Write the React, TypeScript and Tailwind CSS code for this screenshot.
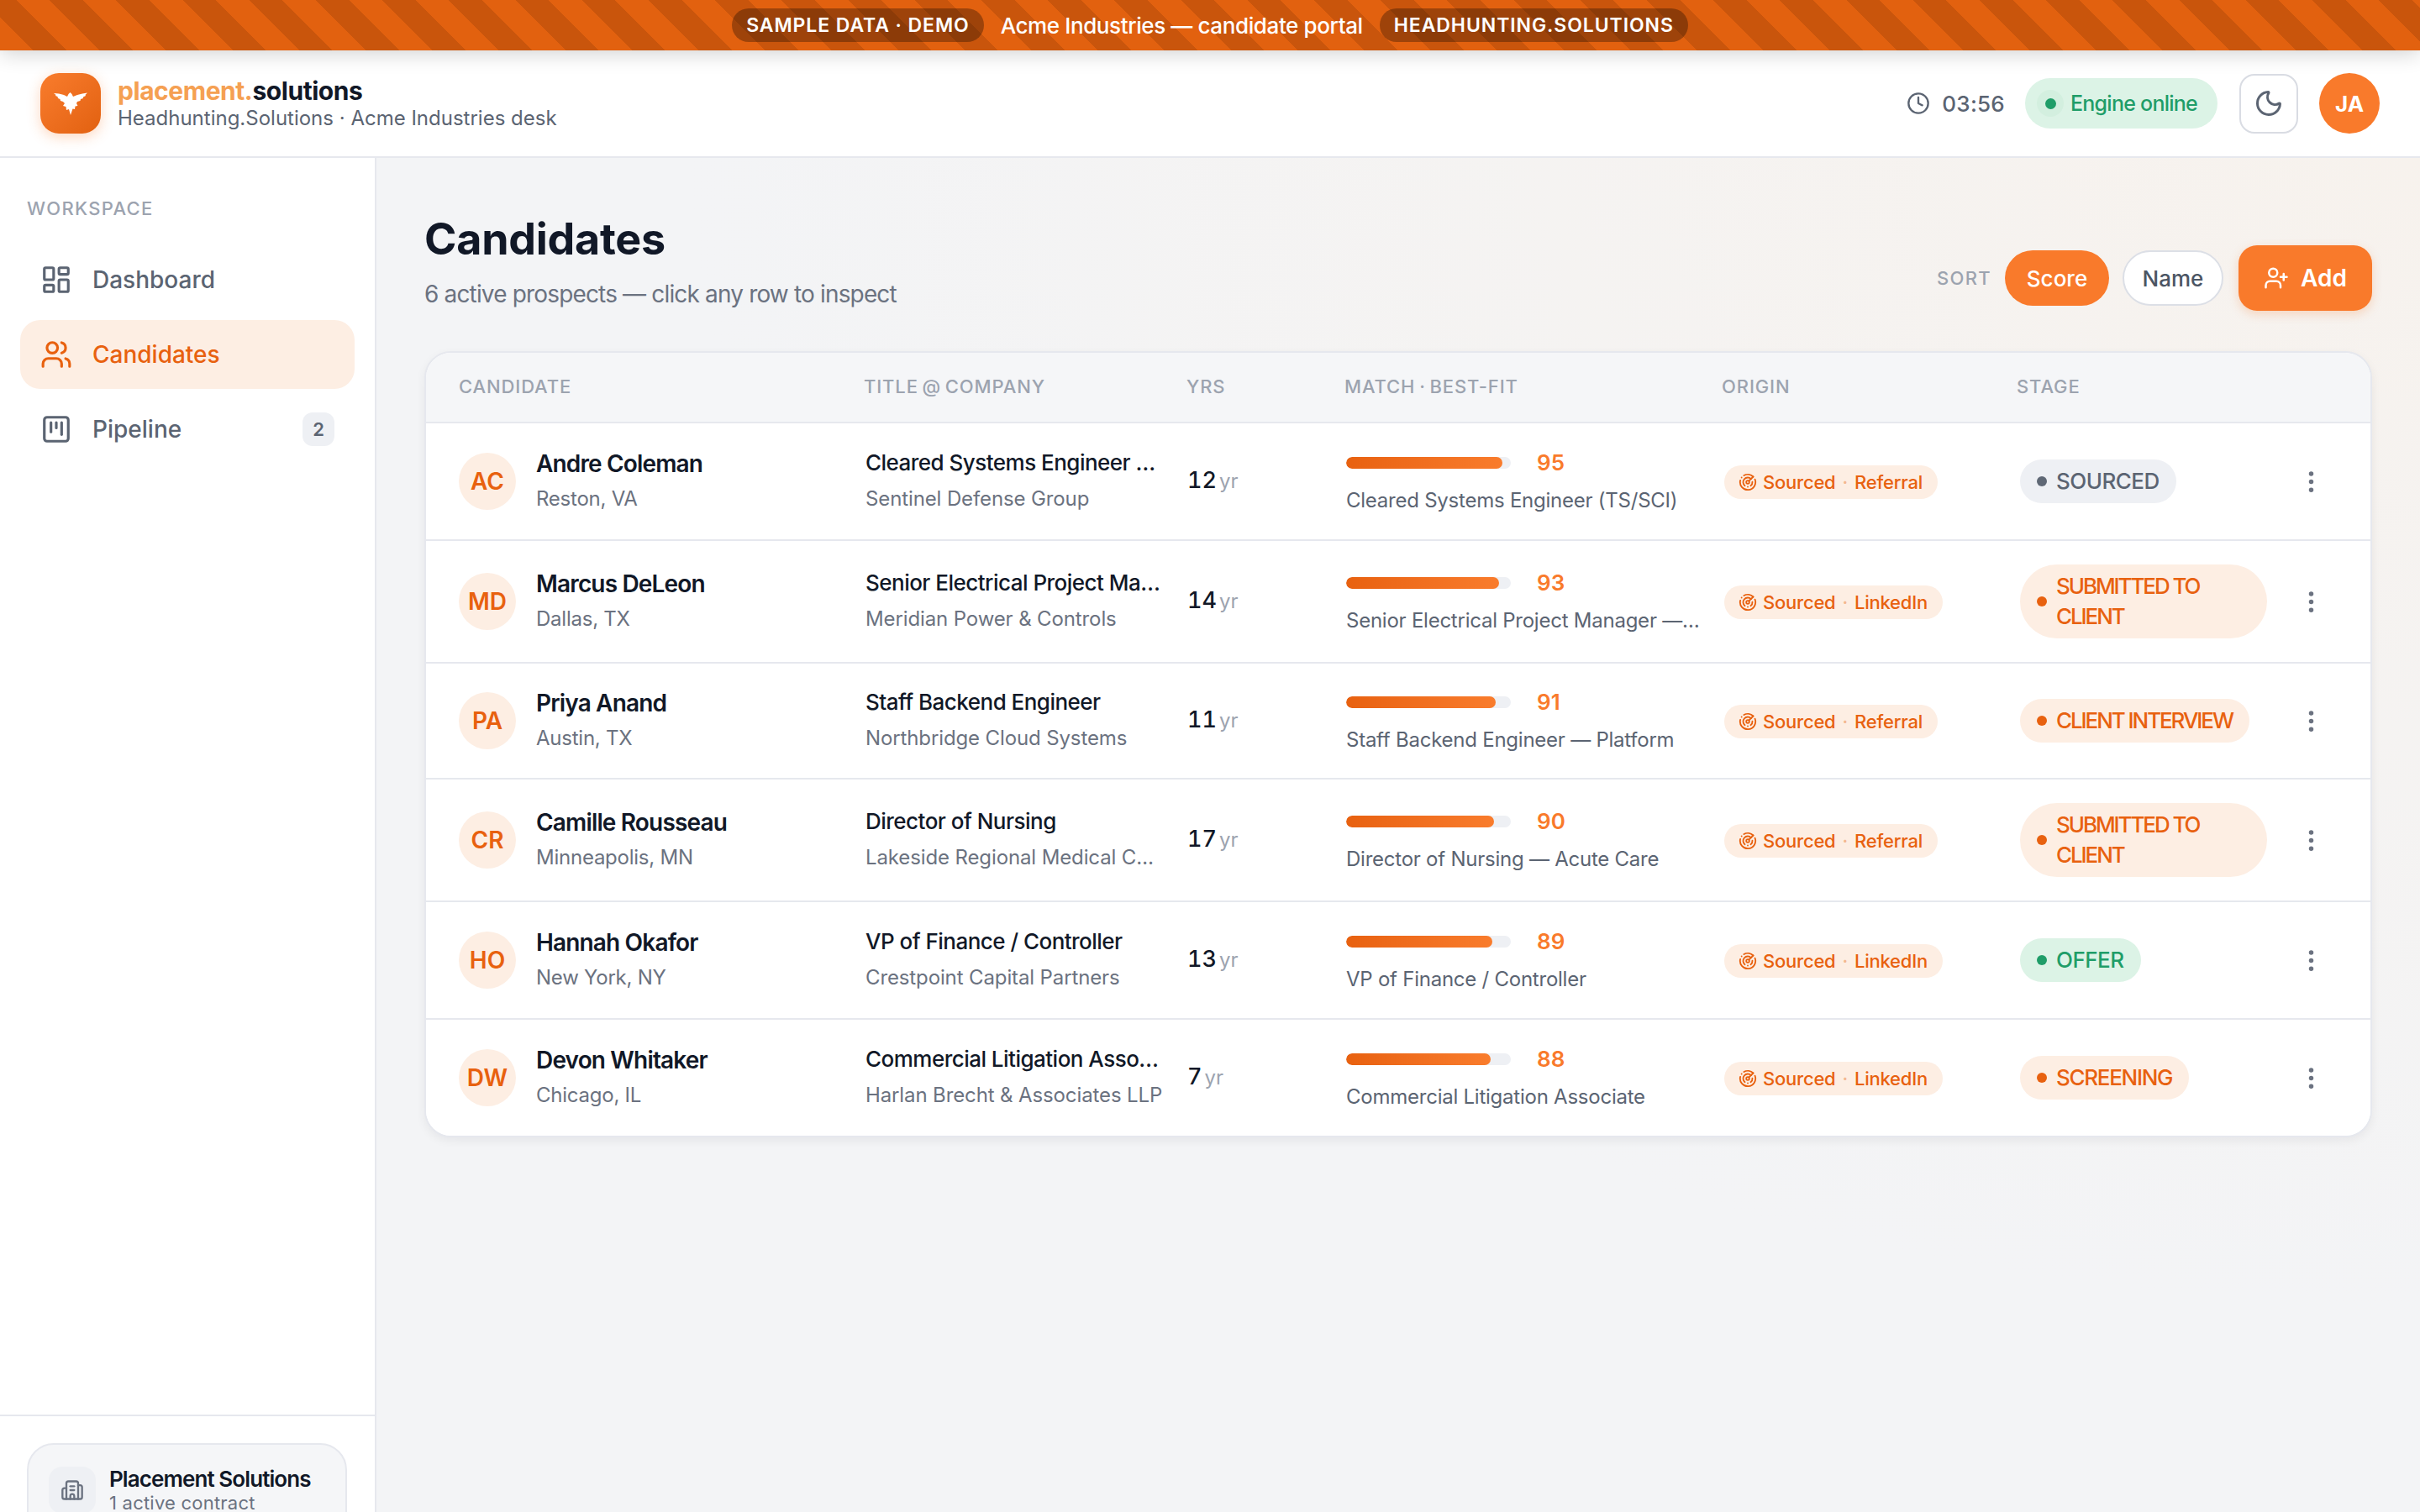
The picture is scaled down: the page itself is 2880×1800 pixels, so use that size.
import { Building2, Clock, EllipsisVertical, LayoutDashboard, Moon, Radar, SquareKanban, UserPlus, Users } from "lucide-react";
import clsx from "clsx";

type Stage = "gray" | "orange" | "green";

const gridCols = "grid grid-cols-[482px_384px_188px_449px_351px_300px_1fr] pl-[39px]";

const stageStyles: Record<Stage, { pill: string; dot: string }> = {
  gray: { pill: "bg-[#eef0f4] text-[#5b6472]", dot: "bg-[#5f6875]" },
  orange: { pill: "bg-[#fdeee3] text-[#e8610f]", dot: "bg-[#e8610f]" },
  green: { pill: "bg-[#dcf3e6] text-[#1f9d68]", dot: "bg-[#1f9d68]" },
};

const tight = "tracking-[-0.08em]";
const mid = "tracking-[-0.05em]";
const loose = "tracking-[-0.02em]";

const candidates = [
  { initials: "AC", name: "Andre Coleman", loc: "Reston, VA", title: "Cleared Systems Engineer (TS/SCI)", company: "Sentinel Defense Group", yrs: 12, score: 95, fit: "Cleared Systems Engineer (TS/SCI)", origin: "Referral", stage: "SOURCED", tone: "gray" as Stage, track: loose, h: "h-[140px]" },
  { initials: "MD", name: "Marcus DeLeon", loc: "Dallas, TX", title: "Senior Electrical Project Manager", company: "Meridian Power & Controls", yrs: 14, score: 93, fit: "Senior Electrical Project Manager — Utilities", origin: "LinkedIn", stage: "SUBMITTED TO CLIENT", tone: "orange" as Stage, track: tight, h: "h-[146px]" },
  { initials: "PA", name: "Priya Anand", loc: "Austin, TX", title: "Staff Backend Engineer", company: "Northbridge Cloud Systems", yrs: 11, score: 91, fit: "Staff Backend Engineer — Platform", origin: "Referral", stage: "CLIENT INTERVIEW", tone: "orange" as Stage, track: tight, h: "h-[138px]" },
  { initials: "CR", name: "Camille Rousseau", loc: "Minneapolis, MN", title: "Director of Nursing", company: "Lakeside Regional Medical Center", yrs: 17, score: 90, fit: "Director of Nursing — Acute Care", origin: "Referral", stage: "SUBMITTED TO CLIENT", tone: "orange" as Stage, track: tight, h: "h-[146px]" },
  { initials: "HO", name: "Hannah Okafor", loc: "New York, NY", title: "VP of Finance / Controller", company: "Crestpoint Capital Partners", yrs: 13, score: 89, fit: "VP of Finance / Controller", origin: "LinkedIn", stage: "OFFER", tone: "green" as Stage, track: loose, h: "h-[140px]" },
  { initials: "DW", name: "Devon Whitaker", loc: "Chicago, IL", title: "Commercial Litigation Associate", company: "Harlan Brecht & Associates LLP", yrs: 7, score: 88, fit: "Commercial Litigation Associate", origin: "LinkedIn", stage: "SCREENING", tone: "orange" as Stage, track: mid, h: "h-[138px]" },
];

function Logo() {
  return (
    <div className="flex h-[72px] w-[72px] shrink-0 items-center justify-center rounded-[22px] bg-gradient-to-br from-[#f97c2c] to-[#e2610f] shadow-[0_4px_16px_rgba(249,122,43,0.3)]">
      <svg width="40" height="28" viewBox="0 0 40 28" fill="#fff">
        <polygon points="0,2 6,2.500 12,4 16,6 17.500,3 19.500,1 21.500,3 23,6 28,4 34,2.500 40,1.500 37.500,4 38,5 35,6.500 35,8 32,9 31.500,11 28,12 27,14 28.500,17 25.500,17.500 25,21 22.500,20.500 20,28 18,21 15,22 14.500,18 11,17 13,14 11,12 8,11 7.500,9 5,8 4.500,6 2,5 2.500,4" />
      </svg>
    </div>
  );
}

function NavItem({ icon: Icon, label, active, badge }: { icon: typeof Users; label: string; active?: boolean; badge?: string }) {
  return (
    <div
      className={clsx(
        "flex h-[82px] items-center gap-[24px] rounded-[24px] pl-[24px] pr-[24px] text-[28px] font-medium",
        active ? "bg-[#fdeee3] text-[#e8610f]" : "text-[#5b6472]",
      )}
    >
      <Icon size={38} strokeWidth={2} />
      <span className="flex-1">{label}</span>
      {badge && (
        <span className="flex h-[40px] w-[38px] items-center justify-center rounded-[12px] bg-[#eef0f4] text-[22px] font-semibold">
          {badge}
        </span>
      )}
    </div>
  );
}

function Row({ c, last }: { c: (typeof candidates)[number]; last: boolean }) {
  const tone = stageStyles[c.tone];
  return (
    <div className={clsx(gridCols, "items-center bg-white", c.h, !last && "border-b-2 border-[#e6e8ee]")}>
      <div className="flex items-center gap-[24px]">
        <div className="flex h-[68px] w-[68px] items-center justify-center rounded-full bg-[#fdeee3] text-[28px] font-semibold text-[#e8610f]">
          {c.initials}
        </div>
        <div>
          <p className="text-[28px] leading-[36px] font-semibold tracking-[-0.03em] text-[#111827]">{c.name}</p>
          <p className="mt-[6px] text-[24px] leading-[36px] tracking-[-0.01em] text-[#6b7280]">{c.loc}</p>
        </div>
      </div>
      <div className="mb-[2px] ml-[2px]">
        <p className="max-w-[354px] truncate text-[26px] leading-[36px] font-medium tracking-[-0.02em] text-[#111827]">{c.title}</p>
        <p className="mt-[7px] max-w-[356px] truncate text-[24px] leading-[36px] tracking-[-0.005em] text-[#6b7280]">{c.company}</p>
      </div>
      <div className="mb-[1px] ml-[1px] flex items-baseline gap-[3px]">
        <span className="text-[27px] font-medium tabular-nums text-[#111827]">{c.yrs}</span>
        <span className="text-[24px] text-[#9ca3af]">yr</span>
      </div>
      <div className="ml-[2px]">
        <div className="flex h-[36px] items-center">
          <div className="h-[14px] w-[196px] overflow-hidden rounded-full bg-[#eef0f4]">
            <div className="h-full rounded-full bg-gradient-to-r from-[#e8610f] to-[#f97c2c]" style={{ width: `${c.score}%` }} />
          </div>
          <span className="ml-[31px] text-[26px] font-semibold text-[#f97a2b]">{c.score}</span>
        </div>
        <p className="mt-[9px] max-w-[424px] truncate text-[24px] leading-[36px] tracking-[-0.01em] text-[#5b6472]">{c.fit}</p>
      </div>
      <div className="ml-[3px] mt-[2px]">
        <span className="inline-flex h-[40px] items-center rounded-full bg-[#fdeee3] pl-[17px] pr-[18px] text-[22px] font-medium tracking-[-0.01em] text-[#e8610f]">
          <Radar size={22} strokeWidth={2} />
          <span className="ml-[7px]">Sourced</span>
          <span className="mx-[8px] text-[#f3b78f]">·</span>
          <span>{c.origin}</span>
        </span>
      </div>
      <div className="ml-[4px]">
        <span className={clsx("inline-flex max-w-[294px] items-center gap-[11px] rounded-full px-[20px] py-[8px] text-[26px] leading-[36px] font-medium", c.track, tone.pill)}>
          <span className={clsx("h-[12px] w-[12px] shrink-0 rounded-full", tone.dot)} />
          <span>{c.stage}</span>
        </span>
      </div>
      <div className="pl-[34px] text-[#6b7280]">
        <EllipsisVertical size={33} strokeWidth={2} />
      </div>
    </div>
  );
}

export default function App() {
  return (
    <div className="flex h-screen w-full flex-col overflow-hidden bg-white font-[Inter,sans-serif]">
      <div className="relative z-20 flex h-[60px] shrink-0 items-center justify-center gap-[20px] bg-[repeating-linear-gradient(45deg,#e2610f,#e2610f_28px,#c9550c_28px,#c9550c_56px)] text-white shadow-[0_4px_24px_rgba(0,0,0,0.18)]">
        <span className="flex h-[40px] items-center rounded-full bg-black/30 px-[17px] text-[23px] font-semibold tracking-[0.04em]">SAMPLE DATA · DEMO</span>
        <span className="text-[26px] font-medium tracking-[-0.015em]">Acme Industries — candidate portal</span>
        <span className="flex h-[40px] items-center rounded-full bg-black/30 px-[17px] text-[23px] font-semibold tracking-[0.04em]">HEADHUNTING.SOLUTIONS</span>
      </div>

      <header className="flex h-[128px] shrink-0 items-center justify-between border-b-2 border-[#e6e8ee] bg-white pl-[48px] pr-[48px]">
        <div className="flex items-center gap-[20px]">
          <Logo />
          <div>
            <p className="text-[30px] leading-[36px] font-bold tracking-[-0.015em]">
              <span className="text-[#f5a052]">placement.</span>
              <span className="text-[#111827]">solutions</span>
            </p>
            <p className="text-[24px] leading-[30px] text-[#5b6472]">Headhunting.Solutions · Acme Industries desk</p>
          </div>
        </div>
        <div className="flex items-center">
          <Clock size={28} className="text-[#5b6472]" />
          <span className="ml-[14px] text-[26px] font-medium tracking-[0.01em] text-[#5b6472]">03:56</span>
          <div className="ml-[24px] flex h-[60px] w-[229px] items-center rounded-full bg-[#dcf3e6] pl-[14px] text-[25px] font-medium tracking-[-0.03em] text-[#1f9d68]">
            <span className="flex h-[32px] w-[32px] items-center justify-center rounded-full bg-[#d3efdf]">
              <span className="h-[13px] w-[13px] rounded-full bg-[#1f9d68]" />
            </span>
            <span className="ml-[8px] pt-[1px]">Engine online</span>
          </div>
          <button className="ml-[26px] flex h-[71px] w-[70px] items-center justify-center rounded-[18px] border-2 border-[#d9dce3] bg-white text-[#5b6472]">
            <Moon size={36} />
          </button>
          <div className="ml-[25px] flex h-[72px] w-[72px] items-center justify-center rounded-full bg-[#f97a2b] text-[26px] font-bold text-white">JA</div>
        </div>
      </header>

      <div className="flex min-h-0 flex-1">
        <aside className="flex w-[448px] shrink-0 flex-col border-r-2 border-[#e6e8ee] bg-white">
          <nav className="flex-1 px-[24px] pt-[45px]">
            <p className="mb-[29px] pl-[8px] text-[22px] leading-[30px] font-medium tracking-[0.06em] text-[#9ca3af]">WORKSPACE</p>
            <div className="flex flex-col gap-[7px]">
              <NavItem icon={LayoutDashboard} label="Dashboard" />
              <NavItem icon={Users} label="Candidates" active />
              <NavItem icon={SquareKanban} label="Pipeline" badge="2" />
            </div>
          </nav>
          <div className="h-[116px] shrink-0 overflow-hidden border-t-2 border-[#e6e8ee] pl-[32px] pr-[33px] pt-[32px]">
            <div className="flex h-[120px] items-start gap-[16px] rounded-[32px] border-2 border-[#e6e8ee] bg-[#f5f6f8] pl-[24px] pt-[26px]">
              <div className="flex h-[56px] w-[56px] shrink-0 items-center justify-center rounded-[16px] bg-[#eef0f4] text-[#6b7280]">
                <Building2 size={28} />
              </div>
              <div>
                <p className="text-[26px] leading-[30px] font-semibold tracking-[-0.035em] text-[#111827]">Placement Solutions</p>
                <p className="text-[22px] leading-[26px] tracking-[0.01em] text-[#6b7280]">1 active contract</p>
              </div>
            </div>
          </div>
        </aside>

        <main className="min-w-0 flex-1 bg-[#f3f4f6] bg-[radial-gradient(ellipse_at_top_right,#f7f2ed,transparent_60%)] pl-[57px] pr-[57px] pt-[65px]">
          <div className="mb-[48px] flex items-end justify-between">
            <div>
              <h1 className="text-[52px] leading-[64px] font-bold tracking-[-0.005em] text-[#111827]">Candidates</h1>
              <p className="mt-[13px] text-[28px] leading-[40px] tracking-[-0.03em] text-[#6b7280]">6 active prospects — click any row to inspect</p>
            </div>
            <div className="flex items-center">
              <span className="mr-[16px] text-[22px] font-medium tracking-[0.06em] text-[#9ca3af]">SORT</span>
              <button className="flex h-[66px] w-[124px] items-center justify-center rounded-full bg-[#f97a2b] text-[26px] font-medium text-white">Score</button>
              <button className="ml-[16px] flex h-[66px] w-[120px] items-center justify-center rounded-full border-2 border-[#dcdfe6] bg-white text-[26px] font-medium text-[#4b5563]">Name</button>
              <button className="ml-[18px] flex h-[78px] w-[159px] items-center justify-center gap-[14px] rounded-[22px] bg-[#f97a2b] text-[28px] font-semibold text-white shadow-[0_4px_12px_rgba(249,122,43,0.25)]">
                <UserPlus size={30} />
                Add
              </button>
            </div>
          </div>

          <div className="overflow-hidden rounded-[32px] border-2 border-[#e6e8ee] bg-white shadow-[0_4px_12px_rgba(17,24,39,0.06)]">
            <div className={clsx(gridCols, "h-[84px] items-center border-b-2 border-[#e6e8ee] bg-[#f5f6f8] pb-[2px] text-[22px] font-medium tracking-[0.04em] [word-spacing:-2px] text-[#9ca3af]")}>
              <span>CANDIDATE</span>
              <span>TITLE @ COMPANY</span>
              <span>YRS</span>
              <span>MATCH · BEST-FIT</span>
              <span>ORIGIN</span>
              <span>STAGE</span>
            </div>
            {candidates.map((c, i) => (
              <Row key={c.initials} c={c} last={i === candidates.length - 1} />
            ))}
          </div>
        </main>
      </div>
    </div>
  );
}
